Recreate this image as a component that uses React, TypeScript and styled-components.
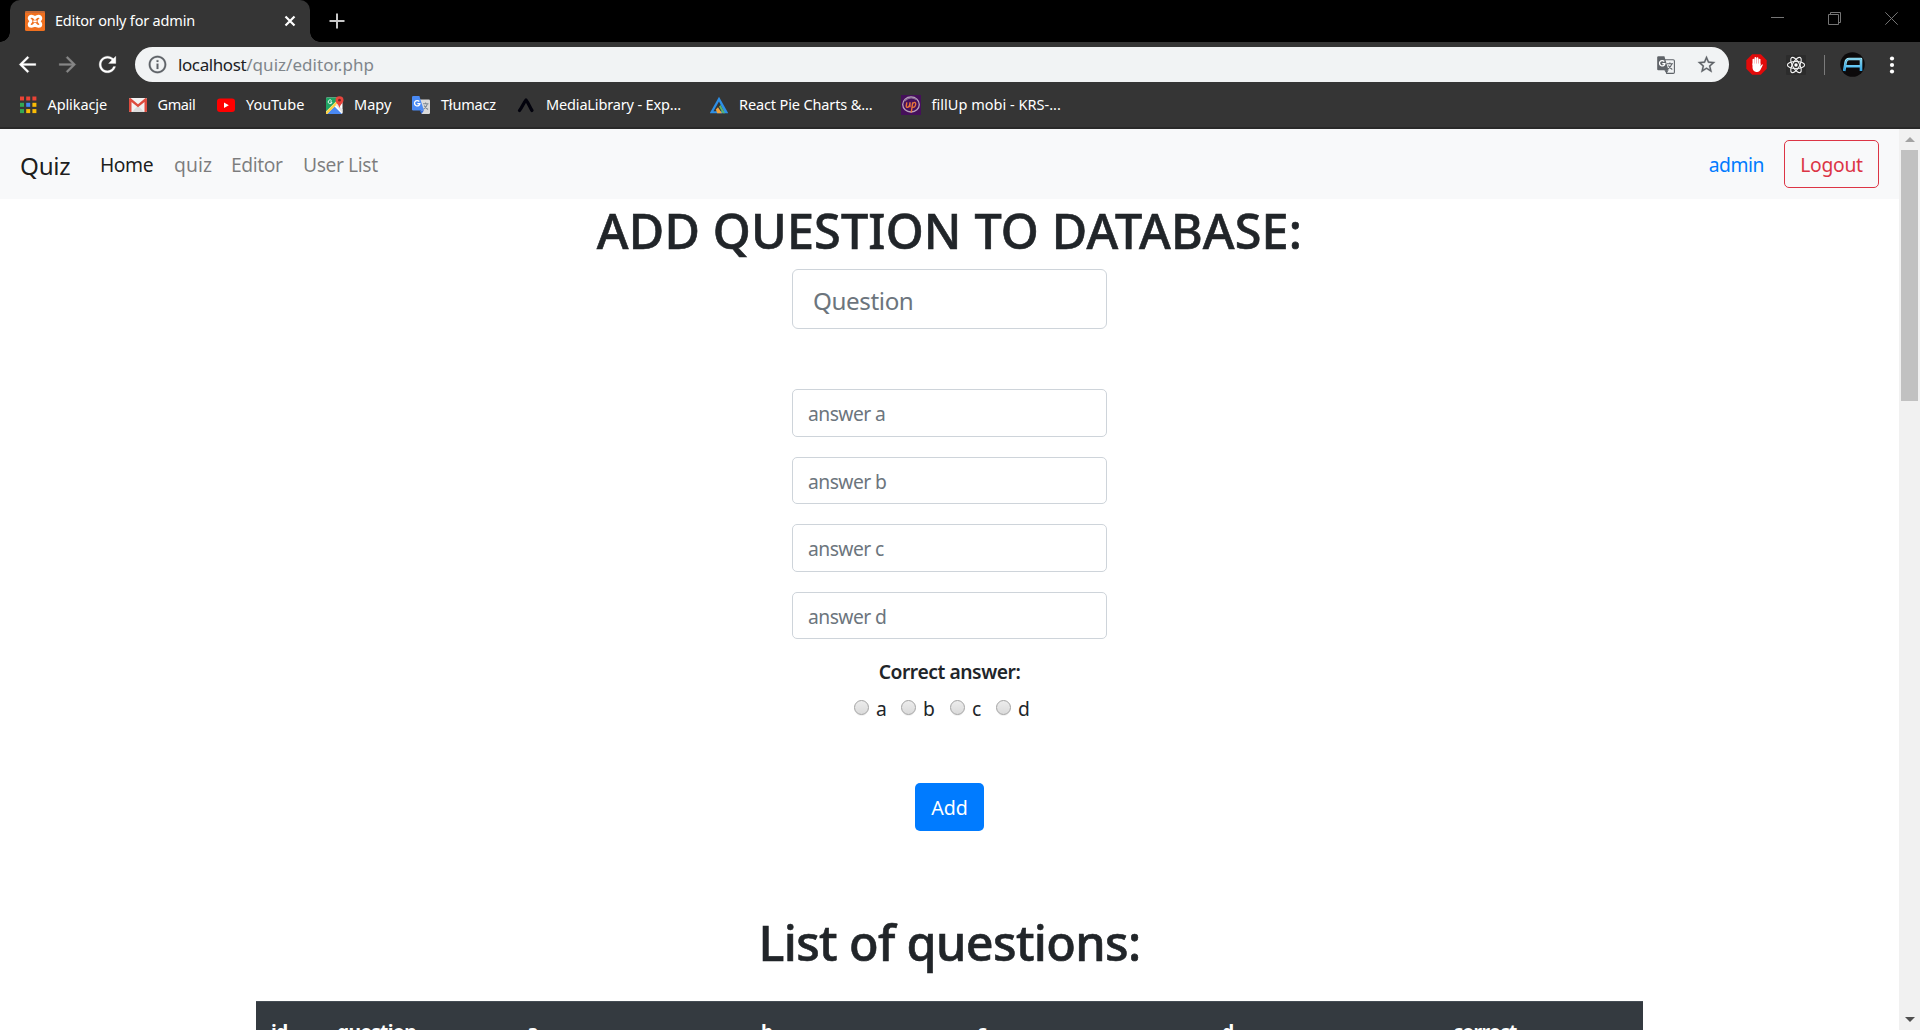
import React from "react";
import styled, { createGlobalStyle } from "styled-components";

const GlobalStyle = createGlobalStyle`
  *, *::before, *::after { box-sizing: border-box; }
  body {
    margin: 0;
    overflow: hidden;
    font-family: "Noto Sans", "Open Sans", sans-serif;
    color: #212529;
    background: #fff;
  }
  svg { display: block; flex: none; }
`;

const Browser = styled.div`
  display: flex;
  flex-direction: column;
  width: 1920px;
  height: 1030px;
  overflow: hidden;
`;

/* ---------- title bar ---------- */

const TitleBar = styled.div`
  display: flex;
  flex: none;
  height: 42px;
  padding-left: 10px;
  background: #000;
`;

const Tab = styled.div`
  position: relative;
  display: flex;
  align-items: center;
  width: 300px;
  height: 42px;
  padding: 0 14px 1px 15px;
  border-radius: 10px 10px 0 0;
  background: #353535;

  &::before,
  &::after {
    content: "";
    position: absolute;
    bottom: 0;
    width: 10px;
    height: 10px;
  }
  &::before {
    left: -10px;
    background: radial-gradient(circle at 0 0, transparent 9.5px, #353535 10px);
  }
  &::after {
    right: -10px;
    background: radial-gradient(circle at 100% 0, transparent 9.5px, #353535 10px);
  }
`;

const TabTitle = styled.span`
  flex: 1;
  margin-left: 10px;
  padding-bottom: 1px;
  font-size: 14.5px;
  letter-spacing: -0.19px;
  line-height: 20px;
  color: #fff;
`;

const NewTab = styled.div`
  display: flex;
  align-items: center;
  margin-left: 19px;
`;

const WindowControls = styled.div`
  display: grid;
  grid-template-columns: repeat(3, 57px);
  height: 37px;
  margin-left: auto;
  align-items: center;
  justify-items: center;
`;

/* ---------- address bar ---------- */

const Toolbar = styled.div`
  display: flex;
  flex: none;
  align-items: center;
  gap: 15px;
  height: 45px;
  padding-left: 15px;
  background: #353535;
`;

const Omnibox = styled.div`
  display: flex;
  align-items: center;
  width: 1594px;
  height: 35px;
  padding: 0 12px;
  border-radius: 18px;
  background: #f1f3f4;
`;

const Url = styled.div`
  flex: 1;
  margin-left: 10px;
  font-size: 17px;
  line-height: 24px;
  color: #80868b;
  letter-spacing: 0.04px;
`;

const Host = styled.span`
  color: #202124;
  letter-spacing: -0.4px;
`;

const PageActions = styled.div`
  display: flex;
  align-items: center;
  gap: 21px;
`;

const Extensions = styled.div`
  display: grid;
  grid-template-columns: 40px 40px 16px 40px 40px;
  margin-left: -8px;
  align-items: center;
  justify-items: center;
`;

const Divider = styled.div`
  width: 1px;
  height: 20px;
  background: #7b7b7b;
`;

/* ---------- bookmarks ---------- */

const Bookmarks = styled.div`
  display: flex;
  flex: none;
  height: 42px;
  padding: 0 0 5px 20px;
  background: #353535;
  border-bottom: 2px solid #292929;
`;

const Bookmark = styled.div<{ $width: number; $gap: number }>`
  display: flex;
  align-items: center;
  gap: ${(p) => p.$gap}px;
  width: ${(p) => p.$width}px;
`;

const BookmarkName = styled.span<{ $spacing: number }>`
  padding-bottom: 2px;
  font-size: 14.5px;
  line-height: 20px;
  letter-spacing: ${(p) => p.$spacing}px;
  white-space: nowrap;
  color: #fff;
`;

/* ---------- page ---------- */

const Viewport = styled.div`
  display: flex;
  flex: 1;
  min-height: 0;
`;

const Page = styled.div`
  display: flex;
  flex-direction: column;
  width: 1899px;
  overflow: hidden;
`;

const Navbar = styled.nav`
  display: flex;
  flex: none;
  align-items: center;
  height: 70px;
  padding: 0 20px;
  background: #f8f9fa;
`;

const Brand = styled.span`
  width: 80px;
  padding-top: 3px;
  font-size: 24.2px;
  line-height: 38px;
  letter-spacing: -0.25px;
  color: rgba(0, 0, 0, 0.9);
`;

const NavLinks = styled.div`
  display: grid;
  grid-template-columns: 74px 57px 72px auto;
  flex: 1;
`;

const NavLink = styled.span<{ $active?: boolean; $spacing?: number }>`
  padding-top: 1px;
  font-size: 19.3px;
  line-height: 30px;
  letter-spacing: ${(p) => p.$spacing ?? -0.42}px;
  color: ${(p) => (p.$active ? "rgba(0, 0, 0, 0.9)" : "rgba(0, 0, 0, 0.5)")};
`;

const UserName = styled.span`
  padding-top: 1px;
  margin-right: 20px;
  font-size: 19.3px;
  line-height: 30px;
  letter-spacing: -0.45px;
  color: #007bff;
`;

const LogoutButton = styled.button`
  width: 95px;
  height: 48px;
  padding: 1px 0 0;
  border: 1px solid #dc3545;
  border-radius: 5px;
  background: transparent;
  font: 400 19.3px/30px "Noto Sans", sans-serif;
  letter-spacing: -0.3px;
  color: #dc3545;
`;

const Heading = styled.h1<{ $top?: number; $spacing: number; $lineHeight: number }>`
  flex: none;
  margin: ${(p) => p.$top ?? 0}px 0 0;
  height: 60px;
  font-size: 48.5px;
  font-weight: 500;
  line-height: ${(p) => p.$lineHeight}px;
  letter-spacing: ${(p) => p.$spacing}px;
  -webkit-text-stroke: 0.6px #212529;
  text-align: center;
  white-space: nowrap;
`;

const Form = styled.form`
  display: flex;
  flex: none;
  flex-direction: column;
  align-items: center;
  margin-top: 10px;
`;

const AnswerList = styled.div`
  display: flex;
  flex-direction: column;
  gap: 20px;
  margin-top: 60px;
`;

const TextInput = styled.input<{ $large?: boolean }>`
  display: block;
  width: 315px;
  height: ${(p) => (p.$large ? 60 : 47.5)}px;
  padding: ${(p) => (p.$large ? "3px 20px 0" : "2px 15px 0")};
  border: 1px solid #ced4da;
  border-radius: ${(p) => (p.$large ? 6 : 5)}px;
  background: #fff;
  outline: none;
  font-family: "Noto Sans", sans-serif;
  font-size: ${(p) => (p.$large ? 24.2 : 19.3)}px;
  letter-spacing: ${(p) => (p.$large ? -0.4 : -0.55)}px;
  color: #495057;

  &::placeholder { color: #6c757d; opacity: 1; }
`;

const GroupLabel = styled.div`
  margin-top: 18px;
  font-size: 19.3px;
  font-weight: 600;
  line-height: 30px;
  letter-spacing: -0.45px;
`;

const Choices = styled.div`
  display: grid;
  grid-template-columns: 47px 49px 46px 46px;
  margin: 6px 3px 0 0;
`;

const Choice = styled.label`
  display: flex;
  align-items: center;
  gap: 7px;
  height: 30px;
`;

const ChoiceName = styled.span`
  padding-top: 2px;
  font-size: 19.3px;
  line-height: 28px;
`;

const Radio = styled.input`
  appearance: none;
  width: 15px;
  height: 15px;
  margin: 0 0 2px;
  border: 1px solid #a3a3a3;
  border-radius: 50%;
  background: linear-gradient(#ededed, #dadada);
  box-shadow: 0 1px 0 rgba(0, 0, 0, 0.06);
`;

const AddButton = styled.button`
  width: 69px;
  height: 48px;
  margin-top: 60px;
  padding: 1px 0 0;
  border: 0;
  border-radius: 5px;
  background: #007bff;
  font: 400 19.6px/30px "Noto Sans", sans-serif;
  color: #fff;
`;

const QuestionTable = styled.div`
  flex: none;
  width: 1387px;
  margin: 29px 0 0 256px;
`;

const HeaderRow = styled.div`
  display: grid;
  grid-template-columns: 66px 190px 234px 216px 245px 231px 205px;
  height: 63px;
  border-top: 1px solid #454d55;
  background: #343a40;
`;

const HeaderCell = styled.div`
  padding: 15px 15px 0;
  font-size: 19.3px;
  font-weight: 700;
  line-height: 30px;
  letter-spacing: -0.7px;
  color: #fff;
`;

const Scrollbar = styled.div`
  display: flex;
  flex-direction: column;
  align-items: center;
  width: 21px;
  background: #f1f1f1;
`;

const ScrollButton = styled.div`
  display: flex;
  align-items: center;
  justify-content: center;
  height: 21px;
`;

const ScrollThumb = styled.div`
  width: 17px;
  height: 251px;
  margin-bottom: auto;
  background: #c1c1c1;
`;

/* ---------- icons ---------- */

const XamppIcon = () => (
  <svg width="20" height="20" viewBox="0 0 20 20">
    <rect width="20" height="20" rx="1.5" fill="#f0701f" />
    <path d="M0 1.5Q0 0 1.5 0H18.500Q20 0 20 1.500V2H0Z" fill="#c96a35" />
    <path
      d="M10 7.400C8.400 4.400 4 4.600 4.200 7.500C4.300 9 6 9.300 6 10.300C6 11.200 4.200 11.700 4.200 13.200C4.200 16 8.400 16.200 10 13.300C11.600 16.200 15.800 16 15.800 13.200C15.800 11.700 14 11.200 14 10.300C14 9.300 15.700 9 15.800 7.500C16 4.600 11.600 4.400 10 7.400Z"
      fill="none"
      stroke="#fff"
      strokeWidth="2.900"
      strokeLinejoin="round"
    />
    <path d="M8.300 10.300H11.700" stroke="#fff" strokeWidth="1.800" />
  </svg>
);

const CloseIcon = () => (
  <svg width="12" height="12" viewBox="0 0 12 12" stroke="#fff" strokeWidth="2.200">
    <path d="M1.500 1.500L10.500 10.500M10.500 1.500L1.500 10.500" />
  </svg>
);

const PlusIcon = () => (
  <svg width="16" height="16" viewBox="0 0 16 16" stroke="#c8c8c8" strokeWidth="2">
    <path d="M8 .5V15.500M.5 8H15.500" />
  </svg>
);

const MinimizeIcon = () => (
  <svg width="13" height="13" viewBox="0 0 13 13" stroke="#757575">
    <path d="M0 5.500H13" />
  </svg>
);

const RestoreIcon = () => (
  <svg width="13" height="13" viewBox="0 0 13 13" fill="none" stroke="#757575">
    <path d="M.5 2.500H10.500V12.500H.5ZM2.500 2.500V.5H12.500V10.500H10.500" />
  </svg>
);

const WindowCloseIcon = () => (
  <svg width="13" height="13" viewBox="0 0 13 13" stroke="#757575">
    <path d="M.3 .3L12.700 12.700M12.700 .3L.3 12.700" />
  </svg>
);

const ToolIcon = ({ d, color = "#fff", size = 25 }: { d: string; color?: string; size?: number }) => (
  <svg width={size} height={size} viewBox="0 0 24 24" fill={color} stroke={color} strokeWidth=".25">
    <path d={d} />
  </svg>
);

const BACK = "M20 11H7.830l5.590-5.590L12 4l-8 8 8 8 1.410-1.410L7.830 13H20v-2z";
const FORWARD = "M12 4l-1.410 1.410L16.170 11H4v2h12.170l-5.580 5.590L12 20l8-8z";
const RELOAD =
  "M17.650 6.350C16.200 4.900 14.210 4 12 4c-4.420 0-7.990 3.580-7.990 8s3.570 8 7.990 8c3.730 0 6.840-2.550 7.730-6h-2.080c-.82 2.330-3.040 4-5.650 4-3.310 0-6-2.690-6-6s2.690-6 6-6c1.660 0 3.140.69 4.220 1.780L13 11h7V4l-2.350 2.350z";
const INFO =
  "M11 17h2v-6h-2v6zm1-15C6.480 2 2 6.480 2 12s4.480 10 10 10 10-4.480 10-10S17.520 2 12 2zm0 18c-4.410 0-8-3.590-8-8s3.590-8 8-8 8 3.590 8 8-3.590 8-8 8zM11 9h2V7h-2v2z";
const STAR =
  "M22 9.240l-7.190-.62L12 2 9.190 8.630 2 9.240l5.460 4.730L5.820 21 12 17.270 18.180 21l-1.630-7.030L22 9.240zM12 15.400l-3.760 2.270 1-4.280-3.320-2.880 4.380-.38L12 6.100l1.710 4.040 4.380.38-3.320 2.880 1 4.280L12 15.400z";

const TranslateIcon = () => (
  <svg width="18" height="18" viewBox="0 0 18 18">
    <path d="M6.500 3.700H16.200Q17.400 3.700 17.400 4.900V16.200Q17.400 17.400 16.200 17.400H9.700Z" fill="#f1f3f4" stroke="#5f6368" strokeWidth="1.100" />
    <path d="M10 7.800H16M12.900 6.500V7.800M14.800 7.900Q14 11.200 10.600 13.300M11.400 9.500Q12.600 12 15.300 13.500" fill="none" stroke="#5f6368" strokeWidth="1.100" />
    <path d="M1.300 .3H7.400L11.500 14.300H1.300Q.2 14.300 .2 13.200V1.400Q.2 .3 1.300 .3Z" fill="#5f6368" />
    <path d="M7.300 14.300H11.500L9.600 17.500Z" fill="#5f6368" />
    <path d="M7.300 5.500A2.700 2.700 0 1 0 7.900 7.600H5.300" fill="none" stroke="#fff" strokeWidth="1.300" />
  </svg>
);

const GoogleTranslateIcon = () => (
  <svg width="18" height="18" viewBox="0 0 18 18">
    <path d="M6.500 3.500H16.800Q18 3.500 18 4.700V16.800Q18 18 16.800 18H9.700Z" fill="#dadada" />
    <path d="M11 7.800H16.500M13.600 6.500V7.800M15.400 7.900Q14.600 11.200 11.400 13.300M12.200 9.500Q13.300 12 16 13.500" fill="none" stroke="#7c8894" strokeWidth="1.100" />
    <path d="M1.300 0H7.400L11.900 14.500H1.300Q0 14.500 0 13.200V1.300Q0 0 1.300 0Z" fill="#4a8af4" />
    <path d="M7.500 14.500H11.900L9.700 17.800Z" fill="#3367d6" />
    <path d="M7.300 5.500A2.700 2.700 0 1 0 7.900 7.600H5.300" fill="none" stroke="#fff" strokeWidth="1.300" />
  </svg>
);

const AdblockIcon = () => (
  <svg width="21" height="21" viewBox="0 0 21 21">
    <path d="M6.200 .3H14.800L20.700 6.200V14.800L14.800 20.700H6.200L.3 14.800V6.200Z" fill="#e20a0a" />
    <path
      d="M7.400 10.500V5.600M9.400 9.500V4M11.500 9.500V4.200M13.600 10.500V5.600"
      stroke="#fff"
      strokeWidth="1.800"
      strokeLinecap="round"
    />
    <path d="M6.500 9.500H14.500V12.600Q15.400 11 15.900 10.400Q17 10.100 16.700 11.200L14.200 16.200Q13.200 17.900 11.300 17.900H10.200Q7 17.600 6.500 14Z" fill="#fff" />
  </svg>
);

const ReactIcon = () => (
  <svg width="20" height="20" viewBox="0 0 20 20">
    <rect width="20" height="20" rx="1" fill="#2c2c2c" />
    <g fill="none" stroke="#f2f2f2" strokeWidth="1.100">
      <ellipse cx="10" cy="10" rx="8.600" ry="3.500" />
      <ellipse cx="10" cy="10" rx="8.600" ry="3.500" transform="rotate(60 10 10)" />
      <ellipse cx="10" cy="10" rx="8.600" ry="3.500" transform="rotate(120 10 10)" />
    </g>
    <circle cx="10" cy="10" r="1.700" fill="#fff" />
  </svg>
);

const AvatarIcon = () => (
  <svg width="25" height="25" viewBox="0 0 25 25">
    <defs>
      <linearGradient id="neon" x1="0" y1="0" x2="0" y2="1">
        <stop offset="0" stopColor="#a8ecfb" />
        <stop offset="1" stopColor="#35aef0" />
      </linearGradient>
    </defs>
    <circle cx="12.500" cy="12.500" r="12.300" fill="#0c0a0b" />
    <path
      d="M4.200 19L5.600 10.500Q6.200 7 9 7H21V19M5.500 14.200H20.500"
      fill="none"
      stroke="url(#neon)"
      strokeWidth="2.600"
      strokeLinejoin="round"
    />
    <path d="M4.200 19L5.600 10.500Q6.200 7 9 7H21V19" fill="none" stroke="#2b89bd" strokeWidth=".5" />
  </svg>
);

const MenuIcon = () => (
  <svg width="6" height="20" viewBox="0 0 6 20" fill="#fff">
    <circle cx="3" cy="3.500" r="2.100" />
    <circle cx="3" cy="10" r="2.100" />
    <circle cx="3" cy="16.500" r="2.100" />
  </svg>
);

const AppsIcon = () => {
  const colors = ["#ea4335", "#ea4335", "#ea4335", "#34a853", "#4285f4", "#fbbc05", "#34a853", "#fbbc05", "#fbbc05"];
  return (
    <svg width="18" height="18" viewBox="0 0 18 18">
      {colors.map((fill, i) => (
        <rect key={i} x={(i % 3) * 6.200} y={0.500 + Math.floor(i / 3) * 6.300} width="4" height="4" fill={fill} />
      ))}
    </svg>
  );
};

const GmailIcon = () => (
  <svg width="18" height="18" viewBox="0 0 18 18">
    <rect x="0" y="2" width="18" height="14" rx="1.200" fill="#f2f2f2" />
    <path d="M3 15.900L9 9.500L15 15.900Z" fill="#dcdcdc" />
    <path d="M0 3.400Q0 2 1.500 2L9 8.300L16.500 2Q18 2 18 3.400V15Q18 16 17 16H15.500V6L9 11.200L2.500 6V16H1Q0 16 0 15Z" fill="#dd4b3e" />
  </svg>
);

const YouTubeIcon = () => (
  <svg width="18" height="18" viewBox="0 0 18 18">
    <rect x="0" y="2.500" width="18" height="13.500" rx="3" fill="#f00" />
    <path d="M7 6.500L11.800 9.250L7 12Z" fill="#fff" />
  </svg>
);

const MapsIcon = () => (
  <svg width="18" height="18" viewBox="0 0 18 18">
    <rect x="0" y="1.500" width="16.500" height="16.500" rx="1.200" fill="#fff" />
    <path d="M0 2.500Q0 1.500 1 1.500H14L0 15.500Z" fill="#1fa463" />
    <path d="M1 18L8.500 10.500L16 18Z" fill="#4a89f3" />
    <path d="M0 15.800L10.500 5.300L12.300 7.100L1.200 18H0Z" fill="#fdd142" />
    <path d="M9.500 9L11 7.500L16.500 13.500V17Z" fill="#e5e5e5" />
    <path d="M13.500 .2A4 4 0 0 1 17.500 4.200C17.500 7 14.300 8 13.500 12C12.700 8 9.500 7 9.500 4.200A4 4 0 0 1 13.500 .2Z" fill="#e8453c" />
    <circle cx="13.500" cy="4.200" r="1.400" fill="#7a2720" />
    <path d="M5.600 4.600A1.900 1.900 0 1 0 6 6H4.200" fill="none" stroke="#fff" strokeWidth=".9" />
  </svg>
);

const ExpoIcon = () => (
  <svg width="18" height="18" viewBox="0 0 18 18">
    <path d="M2.500 14.500C5 11.500 6.500 7 9 4C11.500 7 13 11.500 15 14.500" fill="none" stroke="#02020c" strokeWidth="3.200" strokeLinecap="round" strokeLinejoin="round" />
  </svg>
);

const ChartsIcon = () => (
  <svg width="18" height="18" viewBox="0 0 18 18">
    <path d="M9 .8L18.200 17.200H-.2Z" fill="#2d8fe6" />
    <path d="M9 5.500L13.800 15.200H3.500Z" fill="#353535" />
    <path d="M7.200 17.200L5.800 13.500L8 11.200L12 17.200Z" fill="#f3a33c" />
    <path d="M9 10.500L10.500 9L15 17.200H12.700Z" fill="#5cb56a" />
  </svg>
);

const FillUpIcon = () => (
  <svg width="20" height="20" viewBox="0 0 20 20">
    <rect width="20" height="20" fill="#45105a" />
    <ellipse cx="10" cy="9.500" rx="8.300" ry="7.500" fill="none" stroke="#b9a3bd" strokeWidth="1.300" />
    <path d="M3.500 6Q9 .5 15.500 4.500" fill="none" stroke="#8a6f95" strokeWidth="1.200" />
    <path d="M5.800 7.300L5.200 11.300Q5.300 12.600 6.800 12.300Q8.800 11.500 9 7.300L8.900 12.300M11.700 7.300L10.300 17.500M11.600 8.500Q14.600 6 14.700 9Q14.300 12.800 11.200 12.300" fill="none" stroke="#e8763c" strokeWidth="1.400" />
  </svg>
);

const ArrowUp = () => (
  <svg width="10" height="5" viewBox="0 0 10 5">
    <path d="M5 0L10 5H0Z" fill="#a3a3a3" />
  </svg>
);

const ArrowDown = () => (
  <svg width="10" height="5" viewBox="0 0 10 5">
    <path d="M0 0H10L5 5Z" fill="#505050" />
  </svg>
);

/* ---------- data ---------- */

const bookmarks = [
  { name: "Aplikacje", icon: <AppsIcon />, width: 109, gap: 9.5, spacing: -0.1 },
  { name: "Gmail", icon: <GmailIcon />, width: 88, gap: 10.5, spacing: -0.4 },
  { name: "YouTube", icon: <YouTubeIcon />, width: 109, gap: 11, spacing: -0.05 },
  { name: "Mapy", icon: <MapsIcon />, width: 86, gap: 10, spacing: 0 },
  { name: "Tłumacz", icon: <GoogleTranslateIcon />, width: 105, gap: 11, spacing: -0.2 },
  { name: "MediaLibrary - Exp...", icon: <ExpoIcon />, width: 193, gap: 11, spacing: -0.15 },
  { name: "React Pie Charts &...", icon: <ChartsIcon />, width: 191, gap: 11, spacing: -0.13 },
  { name: "fillUp mobi - KRS-...", icon: <FillUpIcon />, width: 170, gap: 10.5, spacing: 0.02 },
];

const answers = ["a", "b", "c", "d"];
const columns = ["id", "question", "a", "b", "c", "d", "correct"];

export default function App() {
  return (
    <Browser>
      <GlobalStyle />
      <TitleBar>
        <Tab>
          <XamppIcon />
          <TabTitle>Editor only for admin</TabTitle>
          <CloseIcon />
        </Tab>
        <NewTab>
          <PlusIcon />
        </NewTab>
        <WindowControls>
          <MinimizeIcon />
          <RestoreIcon />
          <WindowCloseIcon />
        </WindowControls>
      </TitleBar>

      <Toolbar>
        <ToolIcon d={BACK} />
        <ToolIcon d={FORWARD} color="#868686" />
        <ToolIcon d={RELOAD} />
        <Omnibox>
          <ToolIcon d={INFO} color="#5f6368" size={21} />
          <Url>
            <Host>localhost</Host>/quiz/editor.php
          </Url>
          <PageActions>
            <TranslateIcon />
            <ToolIcon d={STAR} color="#5f6368" size={21} />
          </PageActions>
        </Omnibox>
        <Extensions>
          <AdblockIcon />
          <ReactIcon />
          <Divider />
          <AvatarIcon />
          <MenuIcon />
        </Extensions>
      </Toolbar>

      <Bookmarks>
        {bookmarks.map((b) => (
          <Bookmark key={b.name} $width={b.width} $gap={b.gap}>
            {b.icon}
            <BookmarkName $spacing={b.spacing}>{b.name}</BookmarkName>
          </Bookmark>
        ))}
      </Bookmarks>

      <Viewport>
        <Page>
          <Navbar>
            <Brand>Quiz</Brand>
            <NavLinks>
              <NavLink $active>Home</NavLink>
              <NavLink $spacing={0.1}>quiz</NavLink>
              <NavLink>Editor</NavLink>
              <NavLink>User List</NavLink>
            </NavLinks>
            <UserName>admin</UserName>
            <LogoutButton>Logout</LogoutButton>
          </Navbar>

          <Heading $spacing={0.16} $lineHeight={62}>
            ADD QUESTION TO DATABASE:
          </Heading>
          <Form>
            <TextInput $large placeholder="Question" />
            <AnswerList>
              {answers.map((a) => (
                <TextInput key={a} placeholder={`answer ${a}`} />
              ))}
            </AnswerList>
            <GroupLabel>Correct answer:</GroupLabel>
            <Choices>
              {answers.map((a) => (
                <Choice key={a}>
                  <Radio type="radio" name="correct" />
                  <ChoiceName>{a}</ChoiceName>
                </Choice>
              ))}
            </Choices>
            <AddButton type="button">Add</AddButton>
          </Form>

          <Heading $top={81} $spacing={-0.65} $lineHeight={61}>
            List of questions:
          </Heading>
          <QuestionTable>
            <HeaderRow>
              {columns.map((c) => (
                <HeaderCell key={c}>{c}</HeaderCell>
              ))}
            </HeaderRow>
          </QuestionTable>
        </Page>
        <Scrollbar>
          <ScrollButton>
            <ArrowUp />
          </ScrollButton>
          <ScrollThumb />
          <ScrollButton>
            <ArrowDown />
          </ScrollButton>
        </Scrollbar>
      </Viewport>
    </Browser>
  );
}
